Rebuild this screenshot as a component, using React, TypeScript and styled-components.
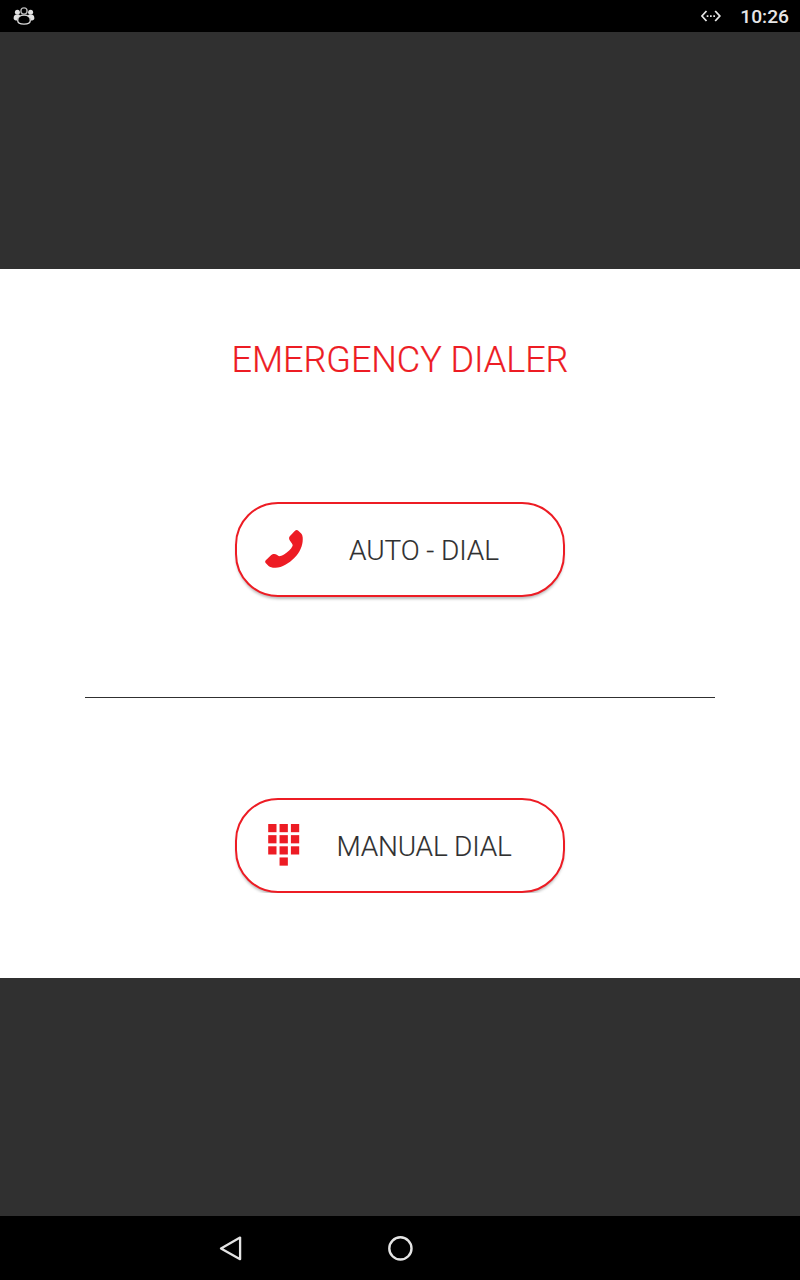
import React from "react";
import styled, { createGlobalStyle } from "styled-components";

const RED = "#ed1c24";

const GlobalStyle = createGlobalStyle`
  * { box-sizing: border-box; }
  html, body { margin: 0; padding: 0; background: #303030; }
  body { font-family: Roboto, "Liberation Sans", sans-serif; }
`;

const Screen = styled.div`
  display: flex;
  flex-direction: column;
  width: 800px;
  height: 1280px;
  overflow: hidden;
  background: #303030;
`;

const StatusBar = styled.header`
  display: flex;
  align-items: center;
  justify-content: space-between;
  flex: none;
  height: 32px;
  padding: 0 11px 0 13px;
  background: #000;
`;

const StatusGroup = styled.div`
  display: flex;
  align-items: center;
  gap: 19px;
`;

const Clock = styled.span`
  padding-top: 1px;
  color: #e6e6e6;
  font-size: 19.200px;
  font-weight: 500;
  line-height: 32px;
`;

const Stage = styled.main`
  display: flex;
  flex: 1;
  flex-direction: column;
  padding-top: 237px;
`;

const Panel = styled.section`
  display: flex;
  flex-direction: column;
  align-items: center;
  height: 709px;
  padding-top: 70px;
  background: #fff;
`;

const Title = styled.h1`
  margin: 0;
  color: ${RED};
  font-size: 36px;
  font-weight: 300;
  letter-spacing: -0.060px;
  line-height: 42px;
  white-space: nowrap;
  -webkit-text-stroke: 0.200px ${RED};
`;

const ButtonFrame = styled.div<{ $top: number; $height: number }>`
  flex: none;
  width: 342px;
  height: ${(p) => p.$height}px;
  margin-top: ${(p) => p.$top}px;
  padding: 0 6px;
  overflow: hidden;
`;

const DialButton = styled.button`
  display: flex;
  align-items: center;
  width: 330px;
  height: 95px;
  padding: 0 0 0 27px;
  border: 2px solid ${RED};
  border-radius: 43px;
  background: #fff;
  box-shadow: 0 3px 3px -1px rgba(0, 0, 0, 0.28);
  color: #303030;
  font-family: inherit;
  text-align: left;
`;

const ButtonLabel = styled.span<{ $tracking: number }>`
  width: 220px;
  margin-left: 10px;
  padding-top: 2px;
  font-size: 28px;
  font-weight: 300;
  letter-spacing: ${(p) => p.$tracking}px;
  line-height: 34px;
  text-align: center;
  white-space: nowrap;
  -webkit-text-stroke: 0.150px #303030;
`;

const Divider = styled.hr`
  flex: none;
  width: 630px;
  height: 1px;
  margin: 94px 0 0;
  border: 0;
  background: #303030;
`;

const NavBar = styled.nav`
  display: flex;
  align-items: center;
  flex: none;
  height: 64px;
  padding-left: 218px;
  gap: 144px;
  background: #000;
`;

const Icon = styled.svg`
  display: block;
  flex: none;
`;

const PeopleIcon = () => (
  <Icon width="22" height="20" viewBox="0 0 22 20" fill="none">
    <g fill="#e2e2e2">
      <circle cx="4.4" cy="6.3" r="2.5" />
      <circle cx="17.6" cy="6.3" r="2.5" />
      <path d="M.6 12.2C.6 9.6 2 8.6 4.4 8.6c1.500 0 2.500.5 3 1.300-2 .8-3 2.500-3 4.600C2 14.500.6 14 .6 12.200ZM21.400 12.200c0-2.600-1.400-3.600-3.800-3.600-1.500 0-2.500.5-3 1.300 2 .8 3 2.500 3 4.600 2.400 0 3.800-.5 3.800-2.300Z" />
    </g>
    <circle cx="11" cy="5" r="3.100" stroke="#b5b5b5" strokeWidth="1.400" />
    <path d="M4.700 14.400c0-3.500 2.500-5.200 6.300-5.200s6.300 1.700 6.300 5.200c0 2.500-2.300 3.700-6.300 3.700s-6.300-1.200-6.300-3.700Z" fill="#000" stroke="#dadada" strokeWidth="1.300" />
  </Icon>
);

const EthernetIcon = () => (
  <Icon width="20" height="12" viewBox="0 0 20 12" fill="none">
    <path d="M5.500 1 .9 6l4.600 5M14.200 1l4.600 5-4.600 5" stroke="#e6e6e6" strokeWidth="1.800" />
    <path d="M5.700 5.200h1.700v1.700H5.700zM9 5.200h1.700v1.700H9zM12.300 5.200h1.700v1.700h-1.700z" fill="#e6e6e6" />
  </Icon>
);

const PhoneIcon = () => (
  <Icon width="40" height="40" viewBox="0 1 40 40">
    <path
      d="M31 1.700C32 .8 33.400.8 34.300 1.700L37.200 4.600C38 5.400 38.500 6.800 38.700 8.500C39.200 15.500 36.500 22.500 30.500 28.800C25 34.500 18 38.600 11.500 38.800C8.500 38.900 6 38.300 4.600 37L1.900 34.300C.9 33.300.9 32.200 1.800 31.300L7 26.300C8.500 24.900 11.200 24.700 12.800 25.800L14.600 27C15.600 27.500 17.500 26.800 20 25.500C24 23 27 20 28.400 17.200C28.900 16.200 28.600 15.300 27.600 13.900L26 11.700C24.800 10.100 24.700 8.500 26 7.100Z"
      fill={RED}
    />
  </Icon>
);

const KEYS = [
  [0, 0], [1, 0], [2, 0],
  [0, 1], [1, 1], [2, 1],
  [0, 2], [1, 2], [2, 2],
  [1, 3],
];

const KeypadIcon = () => (
  <Icon width="40" height="44" viewBox="0 0 40 44">
    {KEYS.map(([col, row]) => (
      <rect
        key={`${col}-${row}`}
        x={4.200 + col * 11.350}
        y={0 + row * 11.150}
        width="8.300"
        height="8.200"
        fill={RED}
      />
    ))}
  </Icon>
);

const BackIcon = () => (
  <Icon width="26" height="28" viewBox="0 0 26 28" fill="none">
    <path d="M22.100 3.600v21.600L3 14.400Z" stroke="#e4e4e4" strokeWidth="2.300" strokeLinejoin="round" />
  </Icon>
);

const HomeIcon = () => (
  <Icon width="26" height="26" viewBox="0 0 26 26" fill="none">
    <circle cx="12.400" cy="13.400" r="11.100" stroke="#e4e4e4" strokeWidth="2.400" />
  </Icon>
);

export default function App() {
  return (
    <Screen>
      <GlobalStyle />
      <StatusBar>
        <PeopleIcon />
        <StatusGroup>
          <EthernetIcon />
          <Clock>10:26</Clock>
        </StatusGroup>
      </StatusBar>
      <Stage>
        <Panel>
          <Title>EMERGENCY DIALER</Title>
          <ButtonFrame $top={121} $height={101}>
            <DialButton type="button">
              <PhoneIcon />
              <ButtonLabel $tracking={-0.1}>AUTO - DIAL</ButtonLabel>
            </DialButton>
          </ButtonFrame>
          <Divider />
          <ButtonFrame $top={100} $height={95}>
            <DialButton type="button">
              <KeypadIcon />
              <ButtonLabel $tracking={-0.22}>MANUAL DIAL</ButtonLabel>
            </DialButton>
          </ButtonFrame>
        </Panel>
      </Stage>
      <NavBar>
        <BackIcon />
        <HomeIcon />
      </NavBar>
    </Screen>
  );
}
